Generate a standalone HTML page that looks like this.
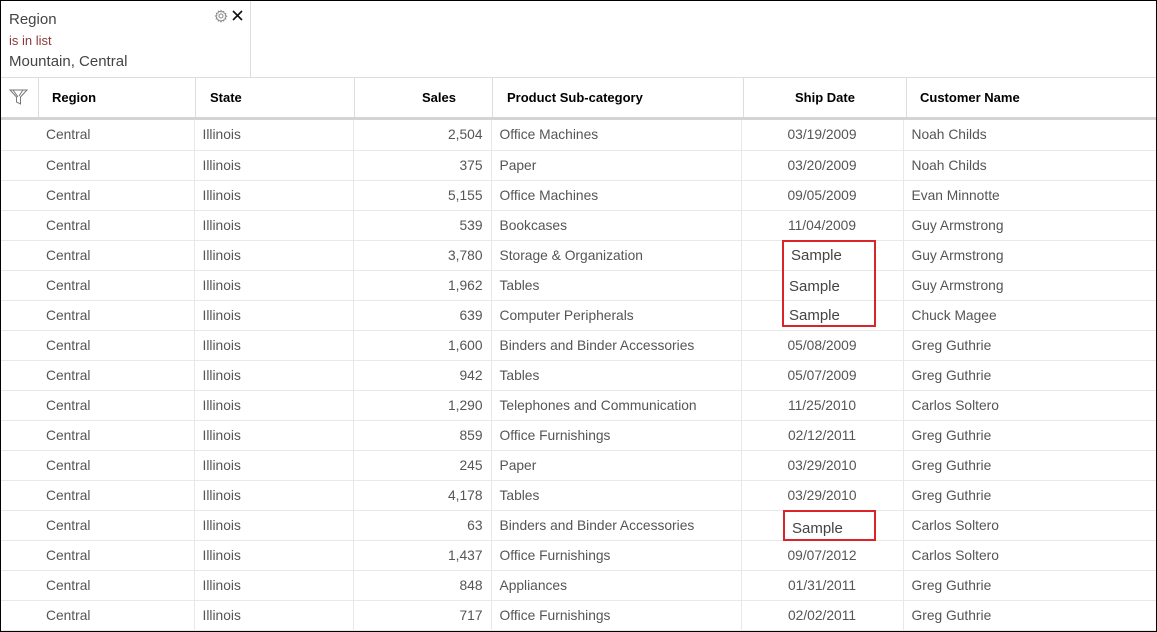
<!DOCTYPE html>
<html><head><meta charset="utf-8"><style>
*{margin:0;padding:0;box-sizing:border-box}
body{width:1157px;height:632px;overflow:hidden;background:#fff;font-family:"Liberation Sans",Arial,sans-serif;position:relative}
.frame{position:absolute;left:0;top:0;width:1157px;height:632px;border:1px solid #000;z-index:5;pointer-events:none}
.fp{position:absolute;left:0;top:0;width:251px;height:77px;border-right:1px solid #ddd}
.fp .t{position:absolute;left:9px;top:11px;font-size:15px;color:#444}
.fp .s{position:absolute;left:9px;top:33px;font-size:13px;color:#8b3a3a}
.fp .v{position:absolute;left:9px;top:53px;font-size:15px;color:#444}
.hdr{position:absolute;left:0;top:77px;width:1157px;height:43px;border-top:1px solid #ddd;border-bottom:3px solid #d4d4d4}
.hc{position:absolute;top:0;height:39px;border-left:1px solid #ddd;font-size:13px;font-weight:bold;color:#000;line-height:39px}
table{position:absolute;left:0;top:120px;border-collapse:collapse;table-layout:fixed;width:1157px}
td{height:30px;border-bottom:1px solid #e8e8e8;border-left:1px solid #e8e8e8;font-size:13.8px;color:#555;white-space:nowrap;padding:0 8px}
td:first-child{border-left:none;padding-left:46px}
td.r{text-align:right}
td.c{text-align:center}
.box{position:absolute;border:2px solid #d9252a}
.sm{position:absolute;font-size:15px;color:#444}
</style></head><body>
<div class="fp"><div class="t">Region</div><div class="s">is in list</div><div class="v">Mountain, Central</div>
<svg style="position:absolute;left:214px;top:9px" width="14" height="14" viewBox="0 0 14 14" fill="none" stroke="#888" stroke-width="1"><circle cx="7" cy="7" r="2"/><path d="M7 1.5l1 1.5 1.7-.6.3 1.8 1.8.3-.6 1.7 1.5 1-1.5 1 .6 1.7-1.8.3-.3 1.8-1.7-.6-1 1.5-1-1.5-1.7.6-.3-1.8-1.8-.3.6-1.7L1.5 7 3 6l-.6-1.7 1.8-.3.3-1.8 1.7.6z"/></svg>
<svg style="position:absolute;left:232px;top:10px" width="11" height="11" viewBox="0 0 11 11" stroke="#111" stroke-width="1.6"><path d="M1 1l9 9M10 1l-9 9"/></svg>
</div>
<div class="hdr">
<svg style="position:absolute;left:9px;top:10px" width="20" height="18" viewBox="0 0 20 18" fill="none" stroke="#777" stroke-width="1"><path d="M1 2h17l-6.5 7v7l-4-2V9z"/><path d="M4 2l5 7M14 2l-4 6"/></svg>
<div class="hc" style="left:38px;width:157px;padding-left:13px">Region</div>
<div class="hc" style="left:195px;width:159px;padding-left:14px">State</div>
<div class="hc" style="left:354px;width:138px;text-align:right;padding-right:36px">Sales</div>
<div class="hc" style="left:492px;width:251px;padding-left:14px">Product Sub-category</div>
<div class="hc" style="left:743px;width:163px;text-align:center">Ship Date</div>
<div class="hc" style="left:906px;width:251px;padding-left:13px">Customer Name</div>
</div>
<table>
<colgroup><col style="width:194px"><col style="width:159px"><col style="width:138px"><col style="width:250px"><col style="width:162px"><col style="width:254px"></colgroup>
<tr><td>Central</td><td>Illinois</td><td class="r">2,504</td><td>Office Machines</td><td class="c">03/19/2009</td><td>Noah Childs</td></tr>
<tr><td>Central</td><td>Illinois</td><td class="r">375</td><td>Paper</td><td class="c">03/20/2009</td><td>Noah Childs</td></tr>
<tr><td>Central</td><td>Illinois</td><td class="r">5,155</td><td>Office Machines</td><td class="c">09/05/2009</td><td>Evan Minnotte</td></tr>
<tr><td>Central</td><td>Illinois</td><td class="r">539</td><td>Bookcases</td><td class="c">11/04/2009</td><td>Guy Armstrong</td></tr>
<tr><td>Central</td><td>Illinois</td><td class="r">3,780</td><td>Storage &amp; Organization</td><td class="c"></td><td>Guy Armstrong</td></tr>
<tr><td>Central</td><td>Illinois</td><td class="r">1,962</td><td>Tables</td><td class="c"></td><td>Guy Armstrong</td></tr>
<tr><td>Central</td><td>Illinois</td><td class="r">639</td><td>Computer Peripherals</td><td class="c"></td><td>Chuck Magee</td></tr>
<tr><td>Central</td><td>Illinois</td><td class="r">1,600</td><td>Binders and Binder Accessories</td><td class="c">05/08/2009</td><td>Greg Guthrie</td></tr>
<tr><td>Central</td><td>Illinois</td><td class="r">942</td><td>Tables</td><td class="c">05/07/2009</td><td>Greg Guthrie</td></tr>
<tr><td>Central</td><td>Illinois</td><td class="r">1,290</td><td>Telephones and Communication</td><td class="c">11/25/2010</td><td>Carlos Soltero</td></tr>
<tr><td>Central</td><td>Illinois</td><td class="r">859</td><td>Office Furnishings</td><td class="c">02/12/2011</td><td>Greg Guthrie</td></tr>
<tr><td>Central</td><td>Illinois</td><td class="r">245</td><td>Paper</td><td class="c">03/29/2010</td><td>Greg Guthrie</td></tr>
<tr><td>Central</td><td>Illinois</td><td class="r">4,178</td><td>Tables</td><td class="c">03/29/2010</td><td>Greg Guthrie</td></tr>
<tr><td>Central</td><td>Illinois</td><td class="r">63</td><td>Binders and Binder Accessories</td><td class="c"></td><td>Carlos Soltero</td></tr>
<tr><td>Central</td><td>Illinois</td><td class="r">1,437</td><td>Office Furnishings</td><td class="c">09/07/2012</td><td>Carlos Soltero</td></tr>
<tr><td>Central</td><td>Illinois</td><td class="r">848</td><td>Appliances</td><td class="c">01/31/2011</td><td>Greg Guthrie</td></tr>
<tr><td>Central</td><td>Illinois</td><td class="r">717</td><td>Office Furnishings</td><td class="c">02/02/2011</td><td>Greg Guthrie</td></tr>
</table>
<div class="box" style="left:782px;top:240px;width:94px;height:87px"></div>
<div class="sm" style="left:791px;top:247px">Sample</div>
<div class="sm" style="left:789px;top:278px">Sample</div>
<div class="sm" style="left:789px;top:307px">Sample</div>
<div class="box" style="left:783px;top:510px;width:93px;height:31px"></div>
<div class="sm" style="left:792px;top:520px">Sample</div>
<div class="frame"></div>
</body></html>
